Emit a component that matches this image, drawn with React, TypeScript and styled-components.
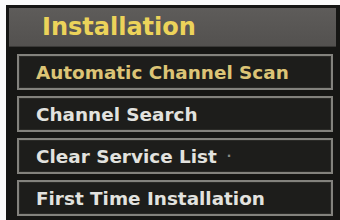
import React from "react";
import styled, { createGlobalStyle } from "styled-components";

const Global = createGlobalStyle`
  html, body { margin: 0; padding: 0; background: #fbfbfb; }
  body { width: 340px; height: 220px; overflow: hidden; }
`;

const Panel = styled.div`
  margin: 5px 0 0 6px;
  width: 334px;
  height: 215px;
  background: #161614;
  box-sizing: border-box;
  padding: 3px 4px 0 3px;
  display: flex;
  flex-direction: column;
`;

const Header = styled.div`
  height: 38px;
  background: linear-gradient(#5e5c5a, #53514f);
  border-bottom: 1px solid #3a3937;
  display: flex;
  align-items: center;
  padding-left: 33px;
  font-family: "DejaVu Sans", sans-serif;
  font-weight: bold;
  font-size: 24px;
  color: #ecd35a;
`;

const List = styled.div`
  display: flex;
  flex-direction: column;
  gap: 6px;
  padding: 7px 0 0 8px;
  width: 316px;
`;

const Row = styled.div<{ $active?: boolean }>`
  height: 36px;
  box-sizing: border-box;
  border: 2px solid #83827d;
  box-shadow: inset 0 0 0 1px #2a2a27;
  background: #1d1d1b;
  display: flex;
  align-items: center;
  padding-left: 17px;
  font-family: "DejaVu Sans", sans-serif;
  font-weight: bold;
  font-size: 18.4px;
  color: ${(p) => (p.$active ? "#dcc476" : "#e2e2df")};
`;

const Dot = styled.span`
  color: #8a8a86;
  font-size: 12px;
  margin-left: 10px;
`;

const items = [
  "Automatic Channel Scan",
  "Channel Search",
  "Clear Service List",
  "First Time Installation",
];

export default function App() {
  return (
    <>
      <Global />
      <Panel>
        <Header>Installation</Header>
        <List>
          {items.map((t, i) => (
            <Row key={t} $active={i === 0}>
              {t}
              {i === 2 && <Dot>·</Dot>}
            </Row>
          ))}
        </List>
      </Panel>
    </>
  );
}
